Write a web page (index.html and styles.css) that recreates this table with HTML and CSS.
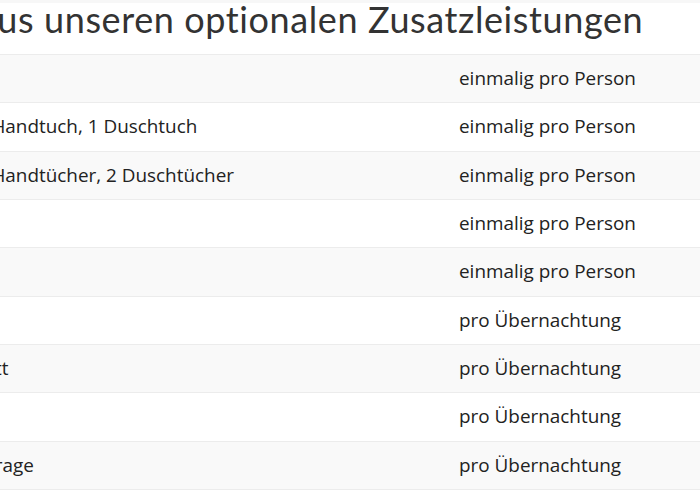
FILE: index.html
```
<!DOCTYPE html>
<html lang="de">
<head>
<meta charset="utf-8">
<title>Zusatzleistungen</title>
<link rel="stylesheet" href="styles.css">
</head>
<body>
<div class="topband"></div>
<h1 class="title">Wählen Sie aus unseren optionalen Zusatzleistungen</h1>
<table class="extras">
  <colgroup><col class="c-name"><col class="c-unit"></colgroup>
  <tbody>
    <tr><td>Bettwäsche</td><td>einmalig pro Person</td></tr>
    <tr><td>Handtuchpaket: 1 Handtuch, 1 Duschtuch</td><td>einmalig pro Person</td></tr>
    <tr><td>Handtuchpaket: 2 Handtücher, 2 Duschtücher</td><td>einmalig pro Person</td></tr>
    <tr><td>Endreinigung</td><td>einmalig pro Person</td></tr>
    <tr><td>Kurtaxe</td><td>einmalig pro Person</td></tr>
    <tr><td>Haustier</td><td>pro Übernachtung</td></tr>
    <tr><td>Babybett / Reisebett</td><td>pro Übernachtung</td></tr>
    <tr><td>Hochstuhl</td><td>pro Übernachtung</td></tr>
    <tr><td>Stellplatz in der Garage</td><td>pro Übernachtung</td></tr>
  </tbody>
</table>
</body>
</html>
```
FILE: styles.css
```
html, body {
  margin: 0;
  padding: 0;
  background: #fff;
  overflow: hidden;
}
body {
  width: 700px;
  height: 500px;
}
.topband {
  height: 3px;
  background: #f7f7f7;
}
.title {
  margin: -5px 0 0 -214px;
  padding: 0 0 14px 0;
  font-family: "Lato", sans-serif;
  font-weight: 400;
  font-size: 36px;
  letter-spacing: 0.6px;
  line-height: 42px;
  color: #333;
  white-space: nowrap;
}
.extras {
  margin-left: -178px;
  width: 1100px;
  table-layout: fixed;
  border-collapse: collapse;
  border-spacing: 0;
  font-family: "Open Sans", sans-serif;
  font-size: 18.9px;
  line-height: 27px;
  color: #222;
}
.c-name { width: 629px; }
.extras td {
  padding: 10.17px 8px;
  border-top: 1px solid #ececec;
  white-space: nowrap;
}
.extras tr:nth-child(odd) { background: #f9f9f9; }
.extras tr:last-child td { border-bottom: 1px solid #ececec; }
```
